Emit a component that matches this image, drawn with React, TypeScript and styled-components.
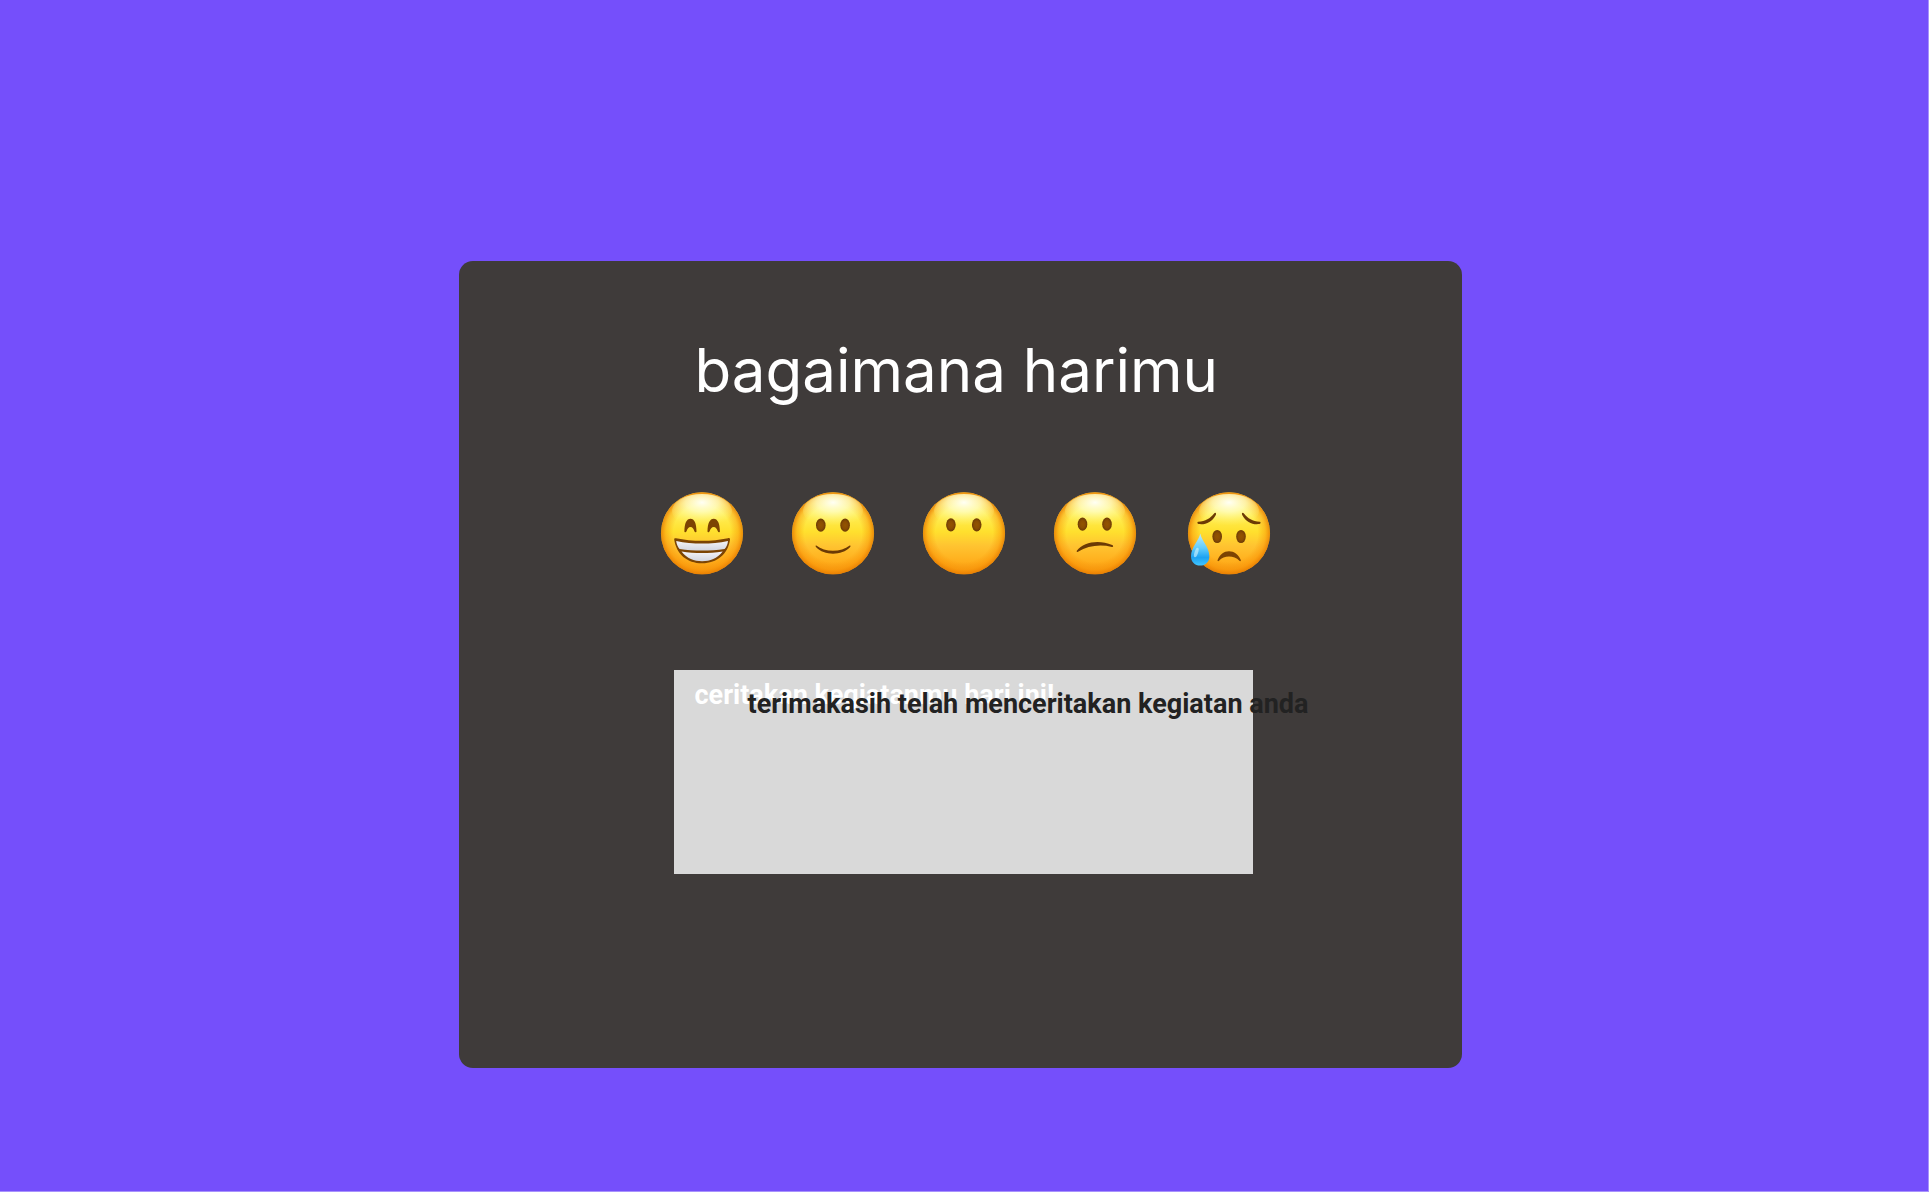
import React, { useState } from "react";
import styled, { createGlobalStyle } from "styled-components";

const GlobalStyle = createGlobalStyle`
  *, *::before, *::after { box-sizing: border-box; }
  body { margin: 0; background: #754ffb; }
`;

const Page = styled.main`
  display: flex;
  justify-content: center;
  align-items: flex-start;
  min-height: 100vh;
  padding: 261px 8px 123px 0;
  border: 0 solid #a892fd;
  border-width: 0 1px 1px 0;
  background: #754ffb;
`;

const Card = styled.section`
  display: flex;
  flex-direction: column;
  align-items: flex-start;
  width: 100%;
  max-width: 1003px;
  padding: 73px 180px 194px 198px;
  border-radius: 14px;
  background: #3f3b3a;
`;

const Title = styled.h1`
  margin: 0 0 82px;
  padding-left: 38px;
  font: 400 60px/72px Inter, sans-serif;
  color: #ffffff;
  white-space: nowrap;
`;

const MoodRow = styled.div`
  display: flex;
  gap: 41px;
  margin-bottom: 92px;
`;

const MoodButton = styled.button`
  display: block;
  padding: 0;
  border: 0;
  background: none;
  cursor: pointer;

  svg { display: block; }
`;

const StoryField = styled.div`
  position: relative;
  width: 100%;
  max-width: 596px;
  padding-left: 17px;
`;

const StoryInput = styled.textarea`
  display: block;
  width: 100%;
  height: 204px;
  padding: 9px 21px;
  border: 0;
  border-radius: 0;
  outline: 0;
  resize: none;
  overflow: hidden;
  background: #d9d9d9;
  color: #222222;
  font: 700 27px/32px Roboto, sans-serif;

  &::placeholder { color: #ffffff; opacity: 1; }
`;

const ThanksMessage = styled.output`
  position: absolute;
  top: 18px;
  left: 91px;
  font: 700 27px/32px Roboto, sans-serif;
  color: #222222;
  white-space: nowrap;
  pointer-events: none;
`;

const HiddenSvg = styled.svg`
  position: absolute;
`;

const INK = "#6b3a05";

function FaceDefs() {
  return (
    <HiddenSvg width="0" height="0" aria-hidden="true">
      <defs>
        <linearGradient id="skin" x1="0" y1="0" x2="0" y2="1">
          <stop offset="0" stopColor="#ffdf4a" />
          <stop offset="0.25" stopColor="#fff05a" />
          <stop offset="0.48" stopColor="#ffe02e" />
          <stop offset="0.65" stopColor="#ffc431" />
          <stop offset="0.85" stopColor="#ffae1c" />
          <stop offset="1" stopColor="#f49a14" />
        </linearGradient>
        <radialGradient id="rim" cx="0.5" cy="0.5" r="0.5">
          <stop offset="0.7" stopColor="#f58a00" stopOpacity="0" />
          <stop offset="0.88" stopColor="#f88c00" stopOpacity="0.42" />
          <stop offset="1" stopColor="#e67b00" stopOpacity="0.85" />
        </radialGradient>
        <radialGradient id="shine" cx="0.5" cy="0.25" r="0.68">
          <stop offset="0" stopColor="#fffff4" stopOpacity="1" />
          <stop offset="0.4" stopColor="#ffffcc" stopOpacity="0.75" />
          <stop offset="1" stopColor="#fff67a" stopOpacity="0" />
        </radialGradient>
        <radialGradient id="iris">
          <stop offset="0" stopColor="#935400" />
          <stop offset="0.55" stopColor="#8a4d02" />
          <stop offset="1" stopColor="#6c3a06" />
        </radialGradient>
        <linearGradient id="tear" x1="0" y1="0" x2="0" y2="1">
          <stop offset="0" stopColor="#b9ecff" />
          <stop offset="0.45" stopColor="#62ccfb" />
          <stop offset="0.75" stopColor="#1ca2f2" />
          <stop offset="1" stopColor="#42c6ff" />
        </linearGradient>
        <linearGradient id="teeth" x1="0" y1="0" x2="0" y2="1">
          <stop offset="0" stopColor="#f4f4f8" />
          <stop offset="1" stopColor="#d2d5df" />
        </linearGradient>
      </defs>
    </HiddenSvg>
  );
}

function Face({ inset = 0, children }: { inset?: number; children: React.ReactNode }) {
  return (
    <svg width={90 + inset} height="90" viewBox={`${-inset} 0 ${90 + inset} 90`} aria-hidden="true">
      <circle cx="45" cy="45.3" r="41" fill="url(#skin)" />
      <circle cx="45" cy="45.3" r="41" fill="url(#rim)" />
      <ellipse cx="45" cy="23" rx="30" ry="17" fill="url(#shine)" />
      {children}
    </svg>
  );
}

function Eyes({ left, right, y }: { left: number; right: number; y: number }) {
  return (
    <>
      <ellipse cx={left} cy={y} rx="4.8" ry="6.6" fill="url(#iris)" />
      <ellipse cx={right} cy={y} rx="4.8" ry="6.6" fill="url(#iris)" />
    </>
  );
}

const moods = [
  {
    name: "sangat senang",
    face: (
      <Face>
        <path d="M27.4 43.2C27.5 35.5 29.6 30.8 33.5 30.8S39.4 35.5 39.5 43.2C39.5 44.6 37.8 44.6 37.4 43.3C36.6 40.6 35.4 39 33.5 39S30.4 40.6 29.5 43.3C29.1 44.6 27.4 44.6 27.4 43.2Z" fill="#7c4302" />
        <path d="M50.5 43.2C50.6 35.5 52.8 30.8 56.7 30.8S62.8 35.5 62.9 43.2C62.9 44.6 61.2 44.6 60.8 43.3C59.9 40.6 58.7 39 56.7 39S53.5 40.6 52.6 43.3C52.2 44.6 50.5 44.6 50.5 43.2Z" fill="#7c4302" />
        <path d="M17.2 51.4C17 50.3 18 50 19 50.2C35 53.6 55 53.6 71 50.2C72.3 49.9 73.2 50.4 73 51.7C71 66 60.2 75.2 45.1 75.2S19.4 66 17.2 51.4Z" fill="#7c4403" />
        <path d="M19.2 52.9C36 56.4 54 56.4 71 52.9C70.6 56.3 69.5 58.8 67.6 61C53 63.1 37 63.1 22.6 61C20.6 58.5 19.6 56 19.2 52.9Z" fill="url(#teeth)" />
        <path d="M24.5 63.5C38 65.6 52 65.6 65.7 63.5C60 70.5 53.3 73.2 45.1 73.2S30.2 70.5 24.5 63.5Z" fill="url(#teeth)" />
      </Face>
    ),
  },
  {
    name: "senang",
    face: (
      <Face>
        <Eyes left={32.8} right={57.1} y={37.2} />
        <path d="M28.3 57.6C37 64.6 53 64.6 61.7 57.6C62.6 57 62.8 58.2 62 59.3C54 67.8 36 67.8 28.2 59.3C27.4 58.2 27.4 57 28.3 57.6Z" fill={INK} />
      </Face>
    ),
  },
  {
    name: "biasa saja",
    face: (
      <Face>
        <Eyes left={31.9} right={57.7} y={36.8} />
      </Face>
    ),
  },
  {
    name: "kurang senang",
    face: (
      <Face>
        <Eyes left={32.5} right={57} y={36.2} />
        <path d="M26.8 62.8C33.5 53.9 49 51.2 62.2 57.1C63.7 57.8 63.3 59.3 62 59C49.5 56.1 38 57.8 28 63.8C27 64.3 26.3 63.6 26.8 62.8Z" fill={INK} />
      </Face>
    ),
  },
  {
    name: "sedih",
    face: (
      <Face inset={3}>
        <Eyes left={33.2} right={57} y={48.5} />
        <path d="M14.2 33.7C21.5 33.2 26.2 30.6 30.1 25.5C31.2 24.1 32.7 25.1 31.8 26.9C27.8 34.2 21.8 36.9 14.8 36.1C13.1 35.8 13 33.8 14.2 33.7Z" fill={INK} />
        <path d="M75.8 33.7C68.5 33.2 63.8 30.6 59.9 25.5C58.8 24.1 57.3 25.1 58.2 26.9C62.2 34.2 68.2 36.9 75.2 36.1C76.9 35.8 77 33.8 75.8 33.7Z" fill={INK} />
        <path d="M33.6 72.1C35.9 66.2 40 63.2 45 63.2S54.4 66.2 56.8 72.1C57.2 73.2 56.1 73.5 55.4 72.8C52.5 69.9 49 68.6 45 68.6S37.8 69.9 35 72.8C34.3 73.5 33.2 73.2 33.6 72.1Z" fill="#7c4302" />
        <path d="M16.3 45.6C17.2 52.2 25.4 59.5 25.4 68.2C25.4 74 21.5 77.6 16.2 77.6S7 74 7 68.2C7 59.5 15.2 52.2 16.3 45.6Z" fill="url(#tear)" />
        <ellipse cx="12.3" cy="64.5" rx="1.8" ry="5" transform="rotate(18 12.3 64.5)" fill="#d7f5ff" opacity="0.6" />
      </Face>
    ),
  },
];

export default function App() {
  const [story, setStory] = useState("");

  return (
    <>
      <GlobalStyle />
      <FaceDefs />
      <Page>
        <Card>
          <Title>bagaimana harimu</Title>
          <MoodRow>
            {moods.map((mood) => (
              <MoodButton key={mood.name} type="button" aria-label={mood.name}>
                {mood.face}
              </MoodButton>
            ))}
          </MoodRow>
          <StoryField>
            <StoryInput
              id="story"
              aria-label="ceritakan kegiatanmu hari ini!"
              placeholder="ceritakan kegiatanmu hari ini!"
              value={story}
              onChange={(event) => setStory(event.target.value)}
            />
            <ThanksMessage htmlFor="story">terimakasih telah menceritakan kegiatan anda</ThanksMessage>
          </StoryField>
        </Card>
      </Page>
    </>
  );
}
